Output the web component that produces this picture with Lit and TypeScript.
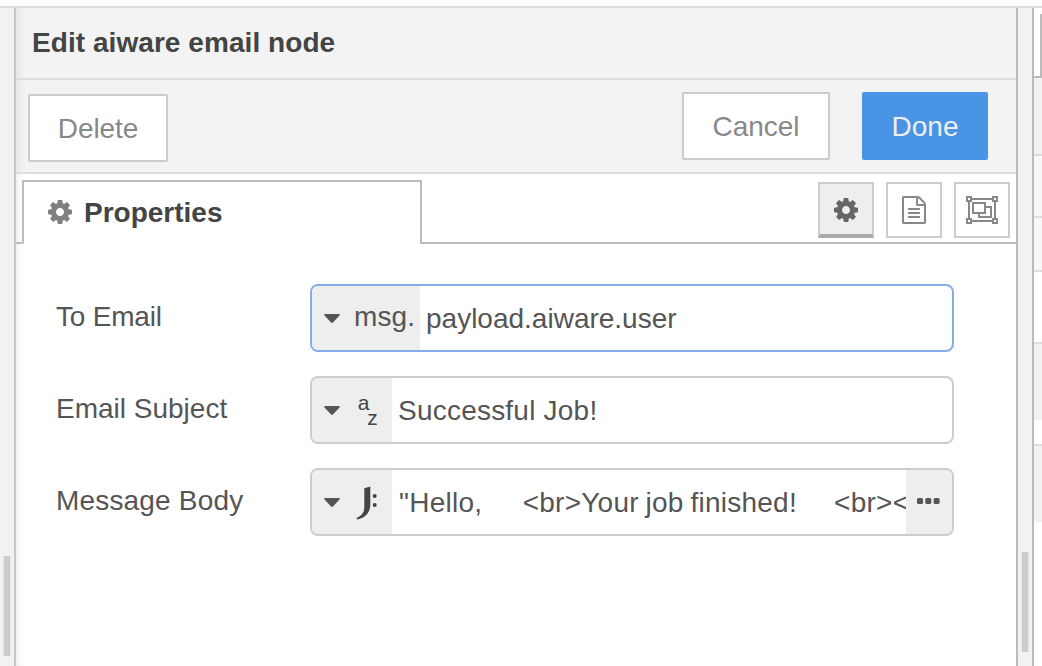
import { LitElement, html, css, svg } from "lit";
import { customElement, property } from "lit/decorators.js";

const cog = html`<svg class="cog" width="24" height="24" viewBox="0 -1408 1536 1536">
  <path transform="scale(1,-1)" d="M1024 640q0 106-75 181t-181 75-181-75-75-181 75-181 181-75 181 75 75 181zm512 109V527q0-12-8-23t-20-13l-185-28q-19-54-39-91 35-50 107-138 10-12 10-25t-9-23q-27-37-99-108t-94-71q-12 0-26 9l-138 108q-44-23-91-38-16-136-29-186-7-28-36-28H657q-14 0-24.500 8.500T621-98L593 86q-49 16-90 37L362 16q-10-9-25-9-14 0-25 11-126 114-165 168-7 10-7 23 0 12 8 23 15 21 51 66.500t54 70.500q-27 50-41 99L29 495q-13 2-21 12.500T0 531v222q0 12 8 23t19 13l186 28q14 46 39 92-40 57-107 138-10 12-10 24 0 10 9 23 26 36 98.500 107.500T337 1273q13 0 26-10l138-107q44 23 91 38 16 136 29 186 7 28 36 28h222q14 0 24.500-8.500T915 1378l28-184q49-16 90-37l142 107q9 9 24 9 13 0 25-10 129-119 165-170 7-8 7-22 0-12-8-23-15-21-51-66.500t-54-70.500q26-50 41-98l183-28q13-2 21-12.500t8-23.500z" fill="currentColor" fill-rule="evenodd"/>
</svg>`;

const doc = html`<svg width="24" height="28" viewBox="128 0 1536 1792">
  <path fill="currentColor" d="M1596 380q28 28 48 76t20 88v1152q0 40-28 68t-68 28h-1344q-40 0-68-28t-28-68v-1600q0-40 28-68t68-28h896q40 0 88 20t76 48zm-444-244v376h376q-10-29-22-41l-313-313q-12-12-41-22zm384 1528v-1024h-416q-40 0-68-28t-28-68v-416h-768v1536h1280zm-1024-864q0-14 9-23t23-9h704q14 0 23 9t9 23v64q0 14-9 23t-23 9h-704q-14 0-23-9t-9-23v-64zm736 224q14 0 23 9t9 23v64q0 14-9 23t-23 9h-704q-14 0-23-9t-9-23v-64q0-14 9-23t23-9h704zm0 256q14 0 23 9t9 23v64q0 14-9 23t-23 9h-704q-14 0-23-9t-9-23v-64q0-14 9-23t23-9h704z"/>
</svg>`;

const group = html`<svg width="32" height="28" viewBox="0 0 2048 1792">
  <path fill="currentColor" fill-rule="evenodd" d="M2048 384h-128v1024h128v384h-384v-128H384v128H0v-384h128V384H0V0h384v128h1280V0h384v384zm-256-256v128h128V128h-128zm-1664 0v128h128V128H128zm128 1536v-128H128v128h128zm1408-128v-128h128V384h-128V256H384v128H256v1024h128v128h1280zm256 128v-128h-128v128h128zM1280 640h384v768H768v-256H384V384h896v256zM512 1024h640V512H512v512zm1024 256V768h-256v384H896v128h640z"/>
</svg>`;

const typeIcons: Record<string, unknown> = {
  str: svg`<text x="1.800" y="18" font-size="21">a</text><text x="11.300" y="33" font-size="21">z</text>`,
  jsonata: svg`<path d="M8.300 4.300L14.300 2.600V20.500C14.300 29.500 8 34.500 1 35.400L0.600 34C5.500 32 8.300 28.500 8.300 23Z"/><circle cx="18.700" cy="12" r="2"/><circle cx="18.700" cy="21" r="2"/>`,
};

@customElement("typed-input")
class TypedInput extends LitElement {
  @property() kind = "msg";
  @property() value: unknown = "";
  @property({ type: Boolean }) focused = false;
  @property({ type: Boolean }) expand = false;

  static styles = css`
    :host { display: block; width: 644px; }
    .box { display: flex; height: 68px; box-sizing: border-box; border: 2px solid #ccc; border-radius: 8px; overflow: hidden; background: #fff; }
    .box.focused { border-color: #85ade7; }
    .type { flex: none; display: flex; align-items: center; width: 80px; background: #eee; box-sizing: border-box; padding-left: 12px; }
    .type.wide { width: 108px; }
    .caret { flex: none; display: block; margin-top: 1px; }
    .prefix { margin-left: 14px; line-height: 32px; margin-top: -2px; letter-spacing: 0.100px; }
    .glyph { margin-left: 16px; flex: none; fill: #444; font-family: "Liberation Sans", sans-serif; overflow: visible; }
    .value { flex: 1; min-width: 0; overflow: hidden; white-space: pre; line-height: 64px; padding: 1px 0 0 6px; }
    .str { letter-spacing: 0.220px; }
    .jsonata { padding-left: 7px; letter-spacing: 0.250px; word-spacing: -1.300px; }
    .next { margin-left: 3.500px; }
    .more { flex: none; width: 46px; background: #eee; display: flex; justify-content: center; align-items: center; }
    .more svg { display: block; margin: -2px 1px 0 0; }
  `;

  render() {
    const icon = typeIcons[this.kind];
    return html`<div class="box ${this.focused ? "focused" : ""}">
      <div class="type ${icon ? "" : "wide"}">
        <svg class="caret" width="16" height="9" viewBox="0 0 16 9"><path d="M1 0H15Q16.500 .5 15.500 1.600L9 8.400Q8 9.300 7 8.400L.5 1.600Q-.5 .5 1 0Z" fill="#555"/></svg>
        ${icon ? html`<svg class="glyph" width="24" height="36" viewBox="0 0 24 36">${icon}</svg>` : html`<span class="prefix">msg.</span>`}
      </div>
      <div class="value ${this.kind}">${this.value}</div>
      ${this.expand ? html`<div class="more"><svg width="23" height="6" viewBox="0 0 23 6" fill="#555"><rect width="6" height="6" rx="1.500"/><rect x="8.300" width="6" height="6" rx="1.500"/><rect x="16.600" width="6" height="6" rx="1.500"/></svg></div>` : ""}
    </div>`;
  }
}

const messageBody = html`${'"Hello,\u00a0\u00a0\u00a0\u00a0\u00a0\u00a0<br>Your job finished!\u00a0\u00a0\u00a0\u00a0\u00a0'}<span class="next">${"<br><"}</span>`;

@customElement("app-root")
class AppRoot extends LitElement {
  static styles = css`
    :host { display: block; width: 1042px; height: 666px; overflow: hidden; font: 28px "Liberation Sans", Arial, sans-serif; color: #555; background: #fff; }
    svg { display: block; }
    .frame { box-sizing: border-box; height: 666px; padding-top: 6px; }
    .body { display: flex; height: 658px; border-top: 2px solid #ddd; }
    .gutter { flex: none; width: 14px; background: #f2f2f2; border-right: 2px solid #c6c6c6; }
    .gutter .thumb { margin: 548px 0 0 4px; width: 6px; height: 100px; background: #ccc; box-shadow: -1px 0 #e4e4e4, 1px 0 #e4e4e4; }
    .panel { flex: none; width: 1000px; background: linear-gradient(90deg, rgba(0,0,0,.06), rgba(0,0,0,.02) 4px, rgba(0,0,0,0) 10px); }
    .title { height: 70px; border-bottom: 2px solid #ddd; background: linear-gradient(90deg, #e6e6e6, #eeeeee 4px, #f3f3f3 10px); padding-left: 16px; line-height: 69px; font-weight: 700; color: #444; letter-spacing: 0.060px; }
    .toolbar { height: 92px; border-bottom: 2px solid #ddd; background: linear-gradient(90deg, #e6e6e6, #eeeeee 4px, #f3f3f3 10px); display: flex; align-items: flex-start; box-sizing: content-box; }
    .btn { box-sizing: border-box; height: 68px; border: 2px solid #ccc; border-radius: 2px; background: #fff; color: #888; text-align: center; line-height: 66px; }
    .delete { width: 140px; margin: 14px auto 0 12px; letter-spacing: -0.100px; }
    .cancel { width: 148px; margin: 12px 32px 0 0; }
    .done { width: 126px; margin: 12px 28px 0 0; background: #4994e4; border-color: #4994e4; color: #eee; }
    .tabs { display: flex; height: 70px; }
    .lead { width: 6px; box-sizing: border-box; border-bottom: 2px solid #bbb; }
    .tab { box-sizing: border-box; width: 400px; border: 2px solid #bbb; border-bottom: 0; margin-top: 6px; border-bottom-left-radius: 2px; background: #fff; display: flex; padding: 18px 0 0 24px; gap: 12px; height: 64px; font-weight: 700; color: #444; line-height: 26px; letter-spacing: 0; }
    .tab .cog { color: #808080; }
    .tools { flex: 1; box-sizing: border-box; border-bottom: 2px solid #bbb; display: flex; justify-content: flex-end; gap: 12px; padding: 8px 6px 0 0; }
    .tool { box-sizing: border-box; width: 56px; height: 56px; border: 2px solid #ccc; display: flex; justify-content: center; align-items: center; color: #888; background: #fff; }
    .tool.on { background: #eee; border-bottom: 4px solid #aaa; padding-top: 2px; color: #666; }
    .form { display: flex; flex-direction: column; gap: 24px; padding: 40px 0 0 40px; }
    .row { display: flex; align-items: center; }
    .label { width: 254px; line-height: 32px; margin-top: -2px; }
    .to { letter-spacing: -0.200px; }
    .message { letter-spacing: 0.180px; }
    .sep { flex: none; width: 14px; background: #f2f2f2; border: solid #bbb; border-width: 0 2px; }
    .sep .thumb { margin: 544px 0 0 4px; width: 6px; height: 100px; background: #ccc; box-shadow: -1px 0 #e4e4e4, 1px 0 #e4e4e4; }
    .side { flex: 1; display: flex; flex-direction: column; }
    .side div { flex: none; box-sizing: border-box; }
    .sidetab { height: 70px; border-bottom: 2px solid #bbb; padding: 6px 0 0 6px; }
    .sidetab div { height: 62px; border-left: 2px solid #bbb; }
    .s1 { height: 78px; background: #f2f2f2; border-bottom: 2px solid #ddd; }
    .s2 { height: 62px; background: #f8f8f8; border-bottom: 2px solid #ddd; }
    .s3 { height: 54px; background: #f8f8f8; border-bottom: 2px solid #ddd; }
    .s4 { height: 72px; border-bottom: 2px solid #ddd; }
    .s5 { height: 76px; background: #f2f2f2; }
    .s6 { height: 26px; border-bottom: 2px solid #ddd; }
  `;

  render() {
    return html`<div class="frame"><div class="body">
      <div class="gutter"><div class="thumb"></div></div>
      <div class="panel">
        <div class="title">Edit aiware email node</div>
        <div class="toolbar">
          <div class="btn delete">Delete</div>
          <div class="btn cancel">Cancel</div>
          <div class="btn done">Done</div>
        </div>
        <div class="tabs">
          <div class="lead"></div>
          <div class="tab">${cog}<span>Properties</span></div>
          <div class="tools">
            <div class="tool on">${cog}</div>
            <div class="tool">${doc}</div>
            <div class="tool">${group}</div>
          </div>
        </div>
        <div class="form">
          <div class="row"><div class="label to">To Email</div><typed-input kind="msg" focused value="payload.aiware.user"></typed-input></div>
          <div class="row"><div class="label">Email Subject</div><typed-input kind="str" value="Successful Job!"></typed-input></div>
          <div class="row"><div class="label message">Message Body</div><typed-input kind="jsonata" expand .value=${messageBody}></typed-input></div>
        </div>
      </div>
      <div class="sep"><div class="thumb"></div></div>
      <div class="side">
        <div class="sidetab"><div></div></div>
        <div class="s1"></div><div class="s2"></div><div class="s3"></div><div class="s4"></div><div class="s5"></div><div class="s6"></div><div class="s5"></div>
      </div>
    </div></div>`;
  }
}
